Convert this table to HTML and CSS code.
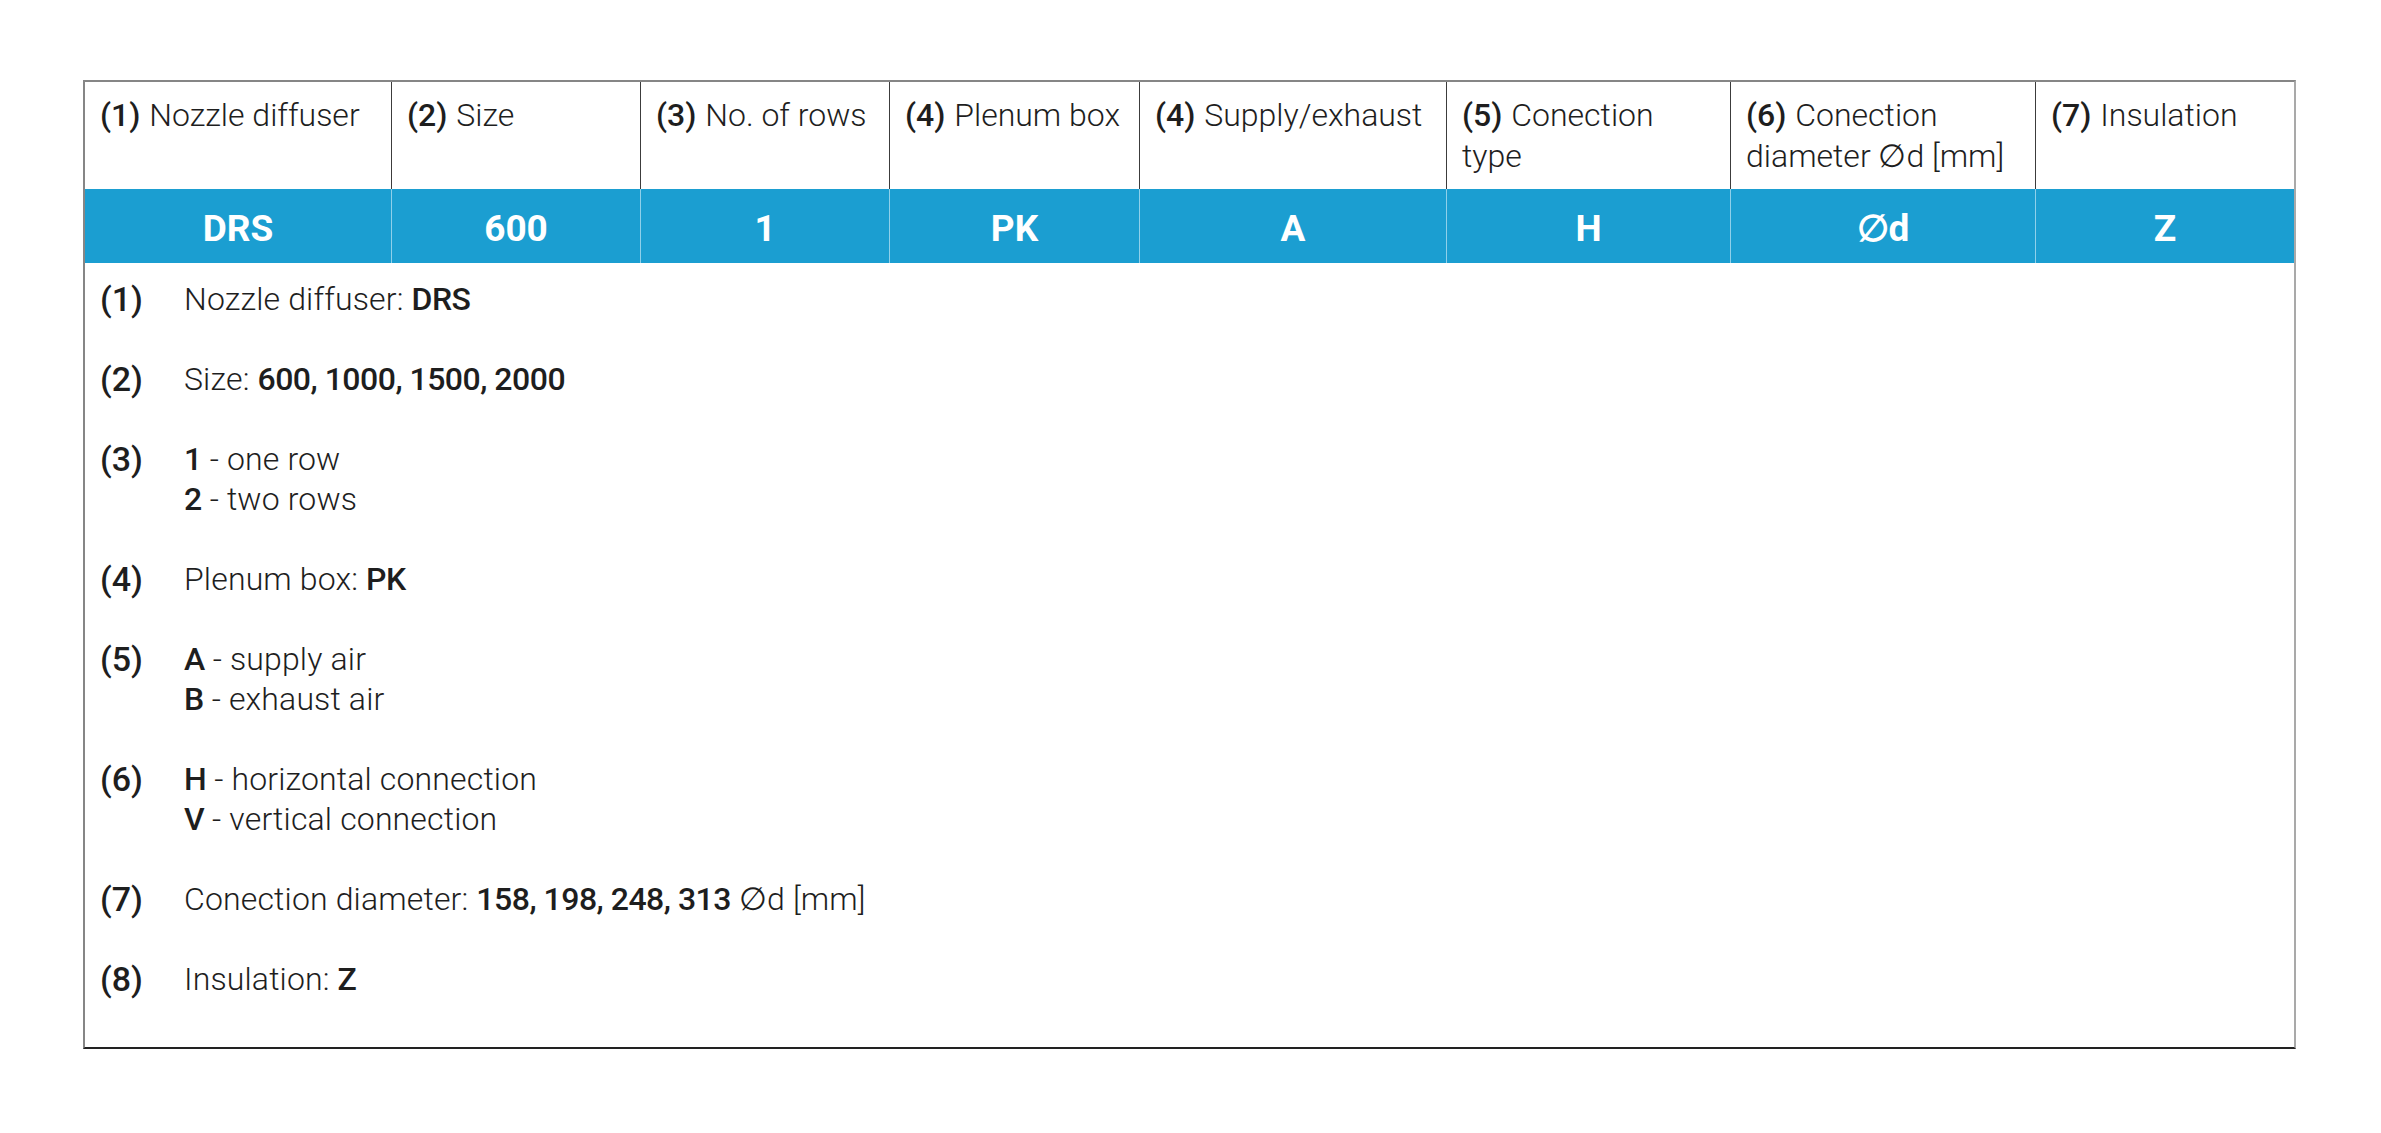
FILE: index.html
```html
<!DOCTYPE html>
<html lang="en">
<head>
<meta charset="utf-8">
<title>DRS ordering key</title>
<link rel="stylesheet" href="styles.css">
</head>
<body>
<div class="spec">
  <div class="head">
    <div class="hc"><b>(1)</b> Nozzle diffuser</div>
    <div class="hc"><b>(2)</b> Size</div>
    <div class="hc"><b>(3)</b> No. of rows</div>
    <div class="hc"><b>(4)</b> Plenum box</div>
    <div class="hc"><b>(4)</b> Supply/exhaust</div>
    <div class="hc"><b>(5)</b> Conection type</div>
    <div class="hc"><b>(6)</b> Conection diameter ∅d [mm]</div>
    <div class="hc"><b>(7)</b> Insulation</div>
  </div>
  <div class="codes">
    <div class="cc">DRS</div>
    <div class="cc">600</div>
    <div class="cc">1</div>
    <div class="cc">PK</div>
    <div class="cc">A</div>
    <div class="cc">H</div>
    <div class="cc">∅d</div>
    <div class="cc">Z</div>
  </div>
  <div class="legend">
    <div class="item"><span class="num">(1)</span><div class="txt">Nozzle diffuser: <b>DRS</b></div></div>
    <div class="item"><span class="num">(2)</span><div class="txt">Size: <b>600, 1000, 1500, 2000</b></div></div>
    <div class="item"><span class="num">(3)</span><div class="txt"><b>1</b> - one row<br><b>2</b> - two rows</div></div>
    <div class="item"><span class="num">(4)</span><div class="txt">Plenum box: <b>PK</b></div></div>
    <div class="item"><span class="num">(5)</span><div class="txt"><b>A</b> - supply air<br><b>B</b> - exhaust air</div></div>
    <div class="item"><span class="num">(6)</span><div class="txt"><b>H</b> - horizontal connection<br><b>V</b> - vertical connection</div></div>
    <div class="item"><span class="num">(7)</span><div class="txt">Conection diameter: <b>158, 198, 248, 313</b> ∅d [mm]</div></div>
    <div class="item"><span class="num">(8)</span><div class="txt">Insulation: <b>Z</b></div></div>
  </div>
</div>
</body>
</html>
```
FILE: styles.css
```css
html, body {
  margin: 0;
  background: #ffffff;
}
body {
  padding: 80px 0 0 83px;
  font-family: Roboto, "Liberation Sans", sans-serif;
  color: #1e1e1e;
}
.spec {
  box-sizing: border-box;
  width: 2213px;
  border-top: 2px solid #868686;
  border-left: 2px solid #868686;
  border-right: 2px solid #a9a9a9;
  border-bottom: 2px solid #222222;
}
.head, .codes {
  display: grid;
  grid-template-columns: 306px 249px 249px 250px 307px 284px 305px 259px;
}
.head {
  height: 107px;
}
.hc {
  box-sizing: border-box;
  padding: 13px 18px 0 15px;
  font-size: 32px;
  font-weight: 300;
  line-height: 41px;
}
.hc + .hc {
  border-left: 1px solid #3c3c3c;
}
.hc b {
  font-weight: 500;
  margin-right: 1px;
}
.codes {
  height: 74px;
  background: #1b9ed1;
}
.cc {
  display: flex;
  align-items: center;
  justify-content: center;
  padding-top: 5px;
  box-sizing: border-box;
  color: #ffffff;
  font-size: 37px;
  font-weight: 700;
}
.cc + .cc {
  border-left: 1px solid #8fd0ea;
}
.legend {
  display: flex;
  flex-direction: column;
  gap: 40px;
  padding: 16px 0 48px 15px;
}
.item {
  display: grid;
  grid-template-columns: 84px 1fr;
  line-height: 40px;
}
.num {
  font-size: 34px;
  font-weight: 500;
}
.txt {
  font-size: 32px;
  font-weight: 300;
  letter-spacing: 0.15px;
}
.txt b {
  font-weight: 500;
  letter-spacing: -0.5px;
}
```
